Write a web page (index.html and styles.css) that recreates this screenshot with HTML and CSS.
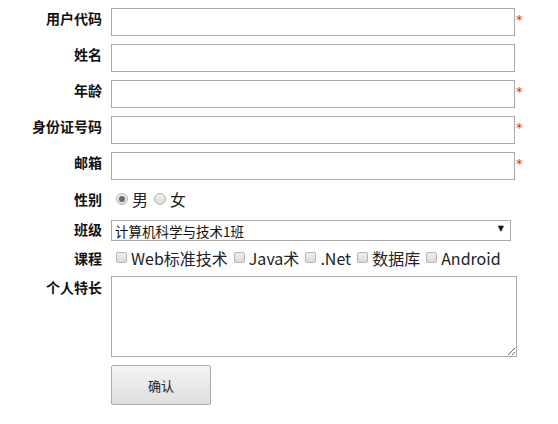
FILE: index.html
```html
<!DOCTYPE html>
<html lang="zh-CN">
<head>
<meta charset="utf-8">
<title>注册</title>
<link rel="stylesheet" href="styles.css">
</head>
<body>
<form class="form">
  <label class="lbl">用户代码</label>
  <div class="field"><input class="txt" type="text"><span class="req">*</span></div>

  <label class="lbl">姓名</label>
  <div class="field"><input class="txt" type="text"></div>

  <label class="lbl">年龄</label>
  <div class="field"><input class="txt" type="text"><span class="req">*</span></div>

  <label class="lbl">身份证号码</label>
  <div class="field"><input class="txt" type="text"><span class="req">*</span></div>

  <label class="lbl">邮箱</label>
  <div class="field"><input class="txt" type="text"><span class="req">*</span></div>

  <label class="lbl lbl-mid">性别</label>
  <div class="field choices radios">
    <input class="radio" type="radio" name="sex" checked><span class="opt">男</span>
    <input class="radio" type="radio" name="sex"><span class="opt">女</span>
  </div>

  <label class="lbl lbl-mid">班级</label>
  <div class="field">
    <div class="selwrap">
      <select class="sel"><option>计算机科学与技术1班</option></select>
      <span class="arrow">▼</span>
    </div>
  </div>

  <label class="lbl lbl-mid">课程</label>
  <div class="field choices checks">
    <input class="check" type="checkbox"><span class="opt">Web标准技术</span>
    <input class="check" type="checkbox"><span class="opt">Java术</span>
    <input class="check" type="checkbox"><span class="opt">.Net</span>
    <input class="check" type="checkbox"><span class="opt">数据库</span>
    <input class="check" type="checkbox"><span class="opt">Android</span>
  </div>

  <label class="lbl lbl-ta">个人特长</label>
  <div class="field"><textarea class="ta"></textarea></div>

  <span></span>
  <div class="field"><button class="btn" type="button">确认</button></div>
</form>
</body>
</html>
```
FILE: styles.css
```css
html, body {
  margin: 0;
  padding: 0;
  background: #fff;
}
body {
  font-family: "Noto Sans CJK SC", "Noto Sans", sans-serif;
  color: #000;
}
.form {
  display: grid;
  grid-template-columns: 103px 1fr;
  grid-template-rows: 28px 28px 28px 28px 28px 22px 21px 21px 81px 40px;
  column-gap: 8px;
  row-gap: 8px;
  padding-top: 8px;
}
.lbl {
  font-size: 14px;
  font-weight: bold;
  line-height: 20px;
  text-align: right;
  padding-right: 1px;
  align-self: start;
  color: #111;
}
.lbl-mid {
  align-self: center;
}
.lbl-ta {
  padding-top: 1px;
}
.field {
  display: flex;
  align-items: flex-start;
}
.txt {
  box-sizing: border-box;
  width: 404px;
  height: 28px;
  margin: 0;
  border: 1px solid #a9a9a9;
  padding: 0 4px;
  font-size: 13px;
  outline: none;
}
.req {
  color: #e3262d;
  font-size: 13px;
  line-height: 14px;
  margin-left: 1px;
  margin-top: 5px;
  font-family: "DejaVu Sans", sans-serif;
}
.choices {
  align-items: center;
  font-size: 16px;
  color: #222;
  height: 22px;
}
.checks {
  height: 21px;
}
.opt {
  line-height: 20px;
}
.radio, .check {
  appearance: none;
  -webkit-appearance: none;
  margin: 0;
  box-sizing: border-box;
  border: 1px solid #b5b5b5;
  background: linear-gradient(#f0f0f0, #d9d9d9);
  flex: none;
}
.radio {
  width: 12px;
  height: 12px;
  border-radius: 50%;
  margin-left: 5px;
  margin-right: 4px;
  position: relative;
}
.radio + .opt + .radio {
  margin-left: 6px;
}
.radio:checked::after {
  content: "";
  position: absolute;
  left: 2px;
  top: 2px;
  width: 6px;
  height: 6px;
  border-radius: 50%;
  background: #6a6a6a;
}
.check {
  width: 11px;
  height: 11px;
  border-radius: 2px;
  margin-left: 6px;
  margin-right: 4px;
}
.checks .check:first-child {
  margin-left: 5px;
}
.selwrap {
  position: relative;
  width: 400px;
  height: 21px;
}
.sel {
  appearance: none;
  -webkit-appearance: none;
  box-sizing: border-box;
  width: 400px;
  height: 21px;
  margin: 0;
  border: 1px solid #a9a9a9;
  border-radius: 0;
  background: #fff;
  padding: 0 3px;
  font-family: "Noto Sans CJK SC", sans-serif;
  font-size: 13.5px;
  color: #111;
  outline: none;
}
.arrow {
  position: absolute;
  right: 7px;
  top: 5px;
  font-size: 8px;
  line-height: 12px;
  color: #111;
  pointer-events: none;
  font-family: "DejaVu Sans", sans-serif;
}
.ta {
  box-sizing: border-box;
  width: 406px;
  height: 81px;
  margin: 0;
  border: 1px solid #a9a9a9;
  padding: 2px;
  font-size: 13px;
  outline: none;
}
.btn {
  box-sizing: border-box;
  width: 100px;
  height: 40px;
  margin: 0;
  border: 1px solid #ababab;
  border-radius: 2px;
  background: linear-gradient(#f4f4f4, #dedede);
  font-family: "Noto Sans CJK SC", sans-serif;
  font-size: 13px;
  color: #222;
}
```
